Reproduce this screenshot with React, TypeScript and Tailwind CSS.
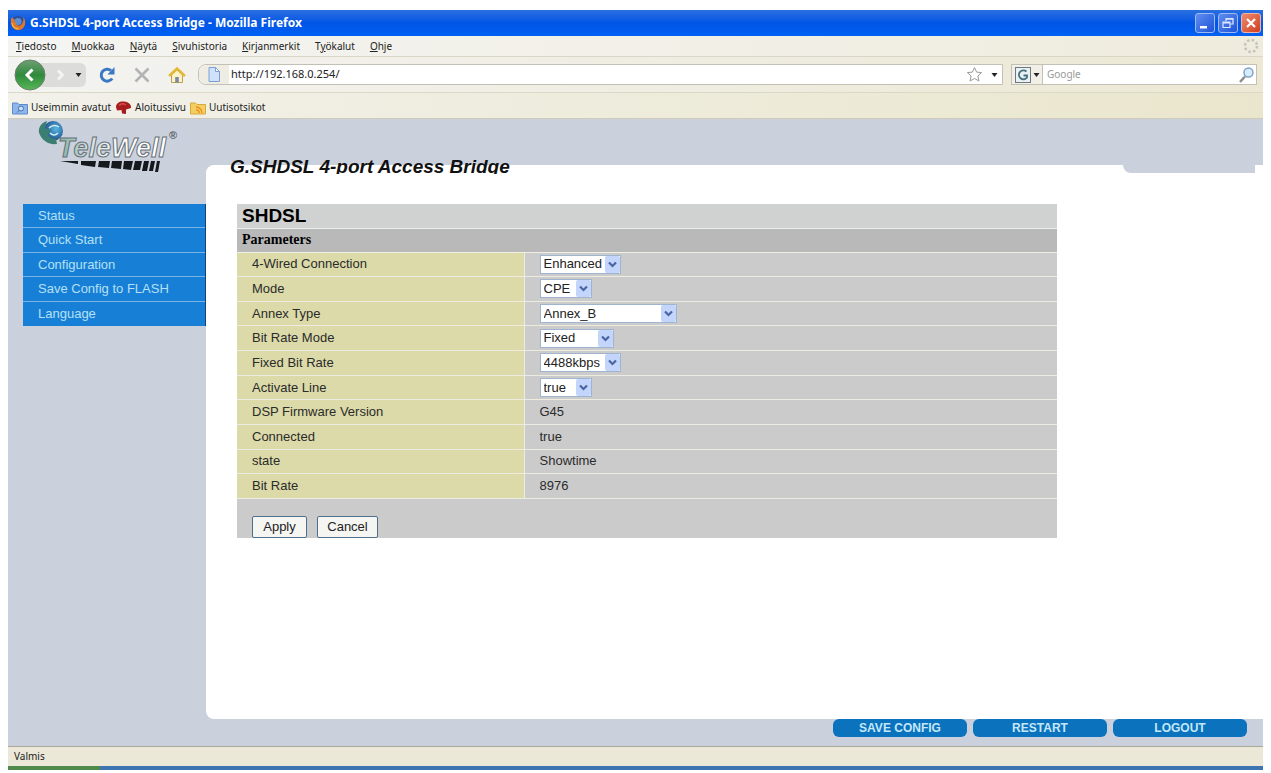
import { useState } from 'react';
import type { ReactNode } from 'react';
import clsx from 'clsx';

const menus = [
  { key: 'T', before: '', after: 'iedosto' },
  { key: 'M', before: '', after: 'uokkaa' },
  { key: 'N', before: '', after: 'äytä' },
  { key: 'S', before: '', after: 'ivuhistoria' },
  { key: 'K', before: '', after: 'irjanmerkit' },
  { key: 'y', before: 'T', after: 'ökalut' },
  { key: 'O', before: '', after: 'hje' },
];

const navItems = ['Status', 'Quick Start', 'Configuration', 'Save Config to FLASH', 'Language'];

type Row = { label: string; value: string; options?: string[]; width?: string };

const rows: Row[] = [
  { label: '4-Wired Connection', value: 'Enhanced', options: ['Enhanced', 'Standard'], width: 'w-[81px]' },
  { label: 'Mode', value: 'CPE', options: ['CPE', 'CO'], width: 'w-[52px]' },
  { label: 'Annex Type', value: 'Annex_B', options: ['Annex_A', 'Annex_B'], width: 'w-[137px]' },
  { label: 'Bit Rate Mode', value: 'Fixed', options: ['Fixed', 'Adaptive'], width: 'w-[74px]' },
  { label: 'Fixed Bit Rate', value: '4488kbps', options: ['4488kbps'], width: 'w-[81px]' },
  { label: 'Activate Line', value: 'true', options: ['true', 'false'], width: 'w-[52px]' },
  { label: 'DSP Firmware Version', value: 'G45' },
  { label: 'Connected', value: 'true' },
  { label: 'state', value: 'Showtime' },
  { label: 'Bit Rate', value: '8976' },
];

const Caret = () => (
  <svg width="7" height="4" viewBox="0 0 7 4" className="shrink-0">
    <path d="M0.5 0h6L3.5 4z" fill="#222" />
  </svg>
);

const FirefoxIcon = () => (
  <svg width="16" height="16" viewBox="0 0 16 16">
    <circle cx="8" cy="8" r="7" fill="#2b4f9c" />
    <circle cx="8" cy="6.5" r="3.6" fill="#5b8fd6" />
    <path d="M1 4C0 11 4 15.4 8.4 15.2 13 15 16 11 15 5.500c-.4-1.500-1-2.500-2-3.200.6 1.700.6 3-.2 4.700C12 10 9.500 11.300 7.500 10.300 6 9.600 5.700 8.200 6.500 7.400L4.200 6.600 5 4.500 3.400 4 2.300 2z" fill="#e0762a" />
    <path d="M2 8c.5 3.500 3 5.800 6.300 5.600" stroke="#f6bd4a" strokeWidth="1.200" fill="none" />
  </svg>
);

const TitleBar = () => (
  <header className="flex h-[26px] shrink-0 items-center bg-linear-to-b from-[#2a6fe0] via-[#0055e5] to-[#0061f5] pr-0.5 pl-0.5">
    <FirefoxIcon />
    <h1 className="ml-1 flex-1 truncate font-['Noto_Sans','Open_Sans',sans-serif] text-xs font-bold text-white">
      G.SHDSL 4-port Access Bridge - Mozilla Firefox
    </h1>
    <div className="flex gap-[3px]">
      <button aria-label="Minimize" className="size-5 rounded-[3px] border border-[#9db9ee] bg-linear-to-br from-[#5f8df0] to-[#1f52d8]">
        <svg width="18" height="18" viewBox="0 0 18 18"><path d="M4 12h7v2.500H4z" fill="#fff" /></svg>
      </button>
      <button aria-label="Restore" className="size-5 rounded-[3px] border border-[#9db9ee] bg-linear-to-br from-[#5f8df0] to-[#1f52d8]">
        <svg width="18" height="18" viewBox="0 0 18 18" fill="none" stroke="#dfe8ff" strokeWidth="1.200">
          <path d="M7 7V4.500h7V10h-2.500M7 5.200h7" />
          <path d="M4 8h7v5.500H4zM4 8.800h7" />
        </svg>
      </button>
      <button aria-label="Close" className="size-5 rounded-[3px] border border-[#e9b5a8] bg-linear-to-br from-[#ee8a6c] to-[#cf3a1c]">
        <svg width="18" height="18" viewBox="0 0 18 18"><path d="M5 5l8 8M13 5l-8 8" stroke="#fff" strokeWidth="2.200" /></svg>
      </button>
    </div>
  </header>
);

const MenuBar = () => (
  <nav className="flex h-[21px] shrink-0 items-center gap-[15px] border-b border-[#d9d6c8] bg-linear-to-r from-[#f4f4f2] to-[#efecdd] pr-1 pl-2 text-[10px]">
    {menus.map((m) => (
      <button key={m.before + m.key + m.after}>
        {m.before}
        <span className="underline">{m.key}</span>
        {m.after}
      </button>
    ))}
    <svg width="16" height="16" viewBox="0 0 16 16" className="ml-auto">
      <circle cx="8" cy="8" r="6" fill="none" stroke="#c4c4bc" strokeWidth="2.500" strokeDasharray="2.500 2.200" />
    </svg>
  </nav>
);

const Toolbar = () => (
  <div className="flex h-9 shrink-0 items-center border-b border-[#dcd8c6] bg-linear-to-r from-[#f3f3f1] to-[#ece8d4] pr-1.5 pl-1.5">
    <button aria-label="Back" className="z-10 size-8 shrink-0 rounded-full">
      <svg width="32" height="32" viewBox="0 0 32 32">
        <defs>
          <linearGradient id="back" x1="0" y1="0" x2="0" y2="1">
            <stop offset="0" stopColor="#6f9f74" />
            <stop offset=".5" stopColor="#2f8a3c" />
            <stop offset="1" stopColor="#57b757" />
          </linearGradient>
        </defs>
        <circle cx="16" cy="16" r="15" fill="url(#back)" stroke="#6b7f6c" />
        <path d="M18.500 10.500L13 16l5.500 5.500" stroke="#fff" strokeWidth="3" fill="none" />
      </svg>
    </button>
    <div className="-ml-2 flex h-6 w-12 shrink-0 items-center justify-between rounded-r-md bg-[#dcdcda] pr-1 pl-4">
      <button aria-label="Forward">
        <svg width="12" height="14" viewBox="0 0 12 14"><path d="M4 2.500L8.500 7 4 11.500" stroke="#f5f5f5" strokeWidth="2.500" fill="none" /></svg>
      </button>
      <button aria-label="History"><Caret /></button>
    </div>
    <div className="ml-3 flex shrink-0 gap-[17px]">
      <button aria-label="Reload">
        <svg width="18" height="18" viewBox="0 0 18 18">
          <path d="M14.200 12.500A6 6 0 1 1 13 4.500" stroke="#3b78c3" strokeWidth="3" fill="none" />
          <path d="M16.500 1v7.500H9.500z" fill="#3b78c3" />
        </svg>
      </button>
      <button aria-label="Stop">
        <svg width="18" height="18" viewBox="0 0 18 18"><path d="M2.500 2.500l13 13M15.500 2.500l-13 13" stroke="#b3b3b3" strokeWidth="2.600" /></svg>
      </button>
      <button aria-label="Home">
        <svg width="18" height="18" viewBox="0 0 18 18">
          <path d="M3.500 9v7.500h11V9L9 4z" fill="#fbf3c6" stroke="#b9a14e" />
          <path d="M1 10l8-7.500 8 7.500" stroke="#e4bb38" strokeWidth="2.400" fill="none" />
          <path d="M7.200 11h3.600v5.500H7.200z" fill="#7f86a8" />
        </svg>
      </button>
    </div>
    <div className="ml-3 flex h-[21px] flex-1 items-center rounded-l-lg border border-[#c3c1b5] bg-white">
      <div className="flex h-full w-[30px] items-center justify-center rounded-l-lg bg-[#efede3]">
        <svg width="12" height="15" viewBox="0 0 12 15">
          <path d="M1 .5h6.500L11.500 4.500v10H1z" fill="#cfe2fa" stroke="#7ba0d6" />
          <path d="M7.500.5v4h4z" fill="#fff" stroke="#7ba0d6" />
        </svg>
      </div>
      <input aria-label="Address" defaultValue="http://192.168.0.254/" className="min-w-0 flex-1 pl-0.5 text-[11px] outline-none" />
      <svg width="17" height="17" viewBox="0 0 17 17">
        <path d="M8.500 1.500l2.100 4.600 5 .5-3.700 3.400 1 5-4.400-2.500-4.400 2.500 1-5L1.400 6.600l5-.5z" fill="#fff" stroke="#9a9a9a" />
      </svg>
      <button aria-label="Show history" className="mr-1 ml-2"><Caret /></button>
    </div>
    <div className="ml-2 flex h-[21px] w-[246px] shrink-0 items-center border border-[#c3c1b5] bg-white">
      <button aria-label="Search engine" className="flex h-full w-[31px] items-center justify-center gap-0.5 border-r border-[#c3c1b5] bg-[#f1efe6]">
        <svg width="16" height="16" viewBox="0 0 16 16">
          <rect x=".5" y=".5" width="15" height="15" fill="#e9f1f4" stroke="#6c7a80" />
          <path d="M11.500 4.500A4.500 4.500 0 1 0 12 10.500V8.500H8.500" stroke="#46707c" strokeWidth="1.800" fill="none" />
        </svg>
        <Caret />
      </button>
      <input aria-label="Search" placeholder="Google" className="min-w-0 flex-1 pl-1 text-[10px] outline-none placeholder:text-[#9a9a9a]" />
      <svg width="18" height="18" viewBox="0 0 18 18">
        <path d="M2 16l5-5.500" stroke="#8d8d8d" strokeWidth="2.500" />
        <circle cx="10.500" cy="6.500" r="4.500" fill="#d8ecfb" stroke="#7fa3c9" strokeWidth="1.500" />
      </svg>
    </div>
  </div>
);

const Bookmark = ({ icon, children }: { icon: ReactNode; children: ReactNode }) => (
  <a href="#" className="flex items-center gap-[3px]">
    {icon}
    {children}
  </a>
);

const BookmarksBar = () => (
  <div className="flex h-[26px] shrink-0 items-center gap-1 border-b border-[#cfcbb8] bg-linear-to-r from-[#f2f1ea] to-[#eae6cd] pt-1 pl-1 text-[10px]">
    <Bookmark
      icon={
        <svg width="16" height="14" viewBox="0 0 16 14">
          <path d="M.5 2h5l1.500 1.500h8.500v9.500H.5z" fill="#8fb6ea" stroke="#5d8bcb" />
          <circle cx="9" cy="7.500" r="2.500" fill="#cfe2fa" stroke="#3f6fb5" />
          <path d="M5 11.500l2.200-2.200" stroke="#3f6fb5" />
        </svg>
      }
    >
      Useimmin avatut
    </Bookmark>
    <Bookmark
      icon={
        <svg width="17" height="15" viewBox="0 0 17 15">
          <path d="M1 7C1 3 5 1 9 1.500 14 2 16.500 5 16 8l-5 1.500L11 14 7 13.500 6.500 10 2 10.500z" fill="#a81c1f" />
          <path d="M4 5.500c2-2 5-2 7-.5" stroke="#d2504a" strokeWidth="1.500" fill="none" />
        </svg>
      }
    >
      Aloitussivu
    </Bookmark>
    <Bookmark
      icon={
        <svg width="16" height="14" viewBox="0 0 16 14">
          <path d="M.5 2h5l1.500 1.500h8.500v9.500H.5z" fill="#f3cf62" stroke="#d9a83a" />
          <path d="M6 6a6 6 0 0 1 6 6M6 8.800A3.200 3.200 0 0 1 9.200 12" stroke="#f08a1d" strokeWidth="1.300" fill="none" />
        </svg>
      }
    >
      Uutisotsikot
    </Bookmark>
  </div>
);

const Logo = () => (
  <svg width="144" height="58" viewBox="0 0 144 58" role="img" aria-label="TeleWell" className="mx-auto">
    <defs>
      <linearGradient id="logo" x1="0" x2="1">
        <stop offset="0" stopColor="#7fb3a2" />
        <stop offset=".3" stopColor="#d3dfe0" />
        <stop offset=".6" stopColor="#ffffff" />
      </linearGradient>
      <radialGradient id="globe" cx=".65" cy=".4">
        <stop offset="0" stopColor="#54b7e0" />
        <stop offset="1" stopColor="#2a5f9a" />
      </radialGradient>
    </defs>
    <circle cx="18" cy="12" r="10" fill="url(#globe)" />
    <path d="M12 2C5 4 2 11 5 16c3 6 9 10 17 9l-1-5c-5 0-8-3-8-6l4-2-7-3z" fill="#3b7f72" />
    <path d="M14 9c3-3 7-3 10-1M15 14c3 3 6 2 8 0" stroke="#d5eef5" strokeWidth="1.500" fill="none" />
    <text x="23" y="38" fontSize="27" className="font-['Liberation_Sans',sans-serif] font-bold italic" fill="url(#logo)" stroke="#666e75" strokeWidth="1">
      TeleWell
    </text>
    <text x="134" y="20" fontSize="11" className="font-['Liberation_Sans',sans-serif] font-bold" fill="#555b63">®</text>
    <g fill="#15181c">
      <path d="M25 42h18v3z" />
      <path d="M46 42h15l-1 6-14-2z" />
      <path d="M64 42h11l-1 7-11-1z" />
      <path d="M77 42h10l-1 8-10-1z" />
      <path d="M89 42h9l-2 9-8-1z" />
      <path d="M100 42h7l-2 9h-7z" />
      <path d="M109 42h5l-2 10h-5z" />
      <path d="M116 42h4l-2 10h-4z" />
      <path d="M122 42h3l-2 11h-3z" />
    </g>
  </svg>
);

const Sidebar = () => (
  <aside className="w-[198px] shrink-0">
    <div className="h-[85px]">
      <Logo />
    </div>
    <nav className="ml-[15px] grid h-[122px] grid-rows-5 divide-y divide-[#79b4e8] border-r border-[#173f7a] bg-[#177fd6] text-[13px] text-[#b5e0f5]">
      {navItems.map((item) => (
        <a key={item} href="#" className="flex items-center pl-[15px]">
          {item}
        </a>
      ))}
    </nav>
  </aside>
);

const SelectBox = ({ id, options, value, width, onChange }: { id: string; options: string[]; value: string; width: string; onChange: (v: string) => void }) => (
  <span className={clsx('relative block h-[19px]', width)}>
    <select
      id={id}
      value={value}
      onChange={(e) => onChange(e.target.value)}
      className="block size-full appearance-none border border-[#9fb4cf] bg-white pl-[3px] text-[13px] leading-4 text-[#222]"
    >
      {options.map((o) => (
        <option key={o}>{o}</option>
      ))}
    </select>
    <span className="pointer-events-none absolute top-px right-px flex h-[17px] w-[15px] items-center justify-center rounded-xs bg-[#c3d5fb]">
      <svg width="9" height="7" viewBox="0 0 9 7"><path d="M1 1.500l3.500 3.500L8 1.500" stroke="#4a64a4" strokeWidth="2.200" fill="none" /></svg>
    </span>
  </span>
);

const ShdslForm = () => {
  const [values, setValues] = useState(() => Object.fromEntries(rows.map((r) => [r.label, r.value])));

  return (
    <form className="mt-[30px] mr-[206px] ml-[31px]" onSubmit={(e) => e.preventDefault()}>
      <table className="h-[295px] w-full table-fixed border-collapse text-left text-[13px] leading-4 text-[#2b2b2b]">
        <colgroup>
          <col className="w-[35%]" />
          <col />
        </colgroup>
        <thead>
          <tr className="h-6 border-b border-[#eceeec] bg-[#d0d2d1]">
            <th colSpan={2} className="pl-[5px] text-[19px] text-black">SHDSL</th>
          </tr>
          <tr className="h-6 border-b border-[#f0f0e4] bg-[#b9b9b9]">
            <th colSpan={2} className="pl-[5px] font-['Liberation_Serif',serif] text-sm leading-4 text-black">Parameters</th>
          </tr>
        </thead>
        <tbody>
          {rows.map((row, i) => (
            <tr key={row.label} className="h-6 border-b border-[#ecece0]">
              <th scope="row" className="border-r border-[#ecece0] bg-[#dbdaa8] pl-[15px] font-normal">
                {row.options ? <label htmlFor={`param-${i}`}>{row.label}</label> : row.label}
              </th>
              <td className="bg-[#cbcbcb] pl-[15px]">
                {row.options && row.width ? (
                  <SelectBox
                    id={`param-${i}`}
                    options={row.options}
                    width={row.width}
                    value={values[row.label]}
                    onChange={(v) => setValues({ ...values, [row.label]: v })}
                  />
                ) : (
                  row.value
                )}
              </td>
            </tr>
          ))}
        </tbody>
      </table>
      <div className="flex h-[39px] items-end gap-2.5 bg-[#cbcbcb] pl-[15px] text-[13px] text-[#222]">
        <button type="submit" className="h-[22px] w-[55px] rounded-xs border border-[#4d6f8f] bg-[#f5f5f2]">Apply</button>
        <button type="reset" className="h-[22px] w-[61px] rounded-xs border border-[#4d6f8f] bg-[#f5f5f2]">Cancel</button>
      </div>
    </form>
  );
};

const RouterPage = () => (
  <main className="flex flex-1 bg-[#cad1dc] font-['Liberation_Sans',Arial,sans-serif]">
    <Sidebar />
    <div className="flex min-w-0 flex-1 flex-col pt-[46px]">
      <section className="relative flex flex-1 flex-col rounded-l-lg bg-white">
        <div className="absolute top-0 right-2 h-2 w-[132px] rounded-bl-lg bg-[#cad1dc]" />
        <h2 className="-mt-2.5 ml-6 h-[19px] overflow-hidden text-[19px] leading-6 font-bold text-[#111] italic">
          G.SHDSL 4-port Access Bridge
        </h2>
        <ShdslForm />
      </section>
      <div className="flex h-[27px] justify-end gap-1.5 pr-4 text-xs font-bold text-[#c4e8fa]">
        {['SAVE CONFIG', 'RESTART', 'LOGOUT'].map((label) => (
          <button key={label} className="h-[18px] w-[134px] rounded-md bg-[#0b72bd]">
            {label}
          </button>
        ))}
      </div>
    </div>
  </main>
);

export default function App() {
  return (
    <div className="flex min-h-screen flex-col bg-white px-2 pt-2.5 pb-[3px] font-['Noto_Sans','Open_Sans',sans-serif] text-[#222]">
      <TitleBar />
      <MenuBar />
      <Toolbar />
      <BookmarksBar />
      <RouterPage />
      <footer className="flex h-5 shrink-0 items-center border-t border-[#aaa89c] bg-[#ece8d8] pl-1.5 text-[10px]">Valmis</footer>
      <div className="flex h-1 shrink-0">
        <div className="w-[92px] bg-[#4f8a4a]" />
        <div className="flex-1 bg-[#3f74b3]" />
      </div>
    </div>
  );
}
